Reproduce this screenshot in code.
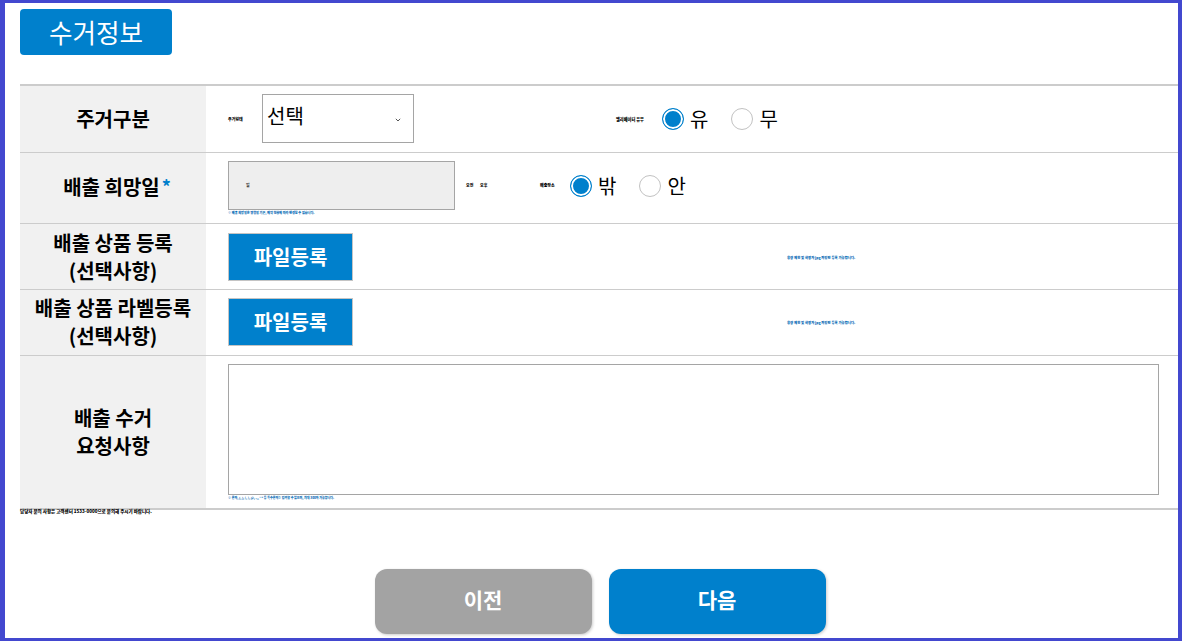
<script>
  let housing = 'yes';
  let side = 'out';
</script>

<div class="page">
  <h2 class="title">수거정보</h2>

  <div class="form">
    <div class="row r1">
      <div class="th">주거구분</div>
      <div class="td">
        <span class="tiny dark t1">주거형태</span>
        <div class="select">
          <span>선택</span>
          <svg width="6" height="4" viewBox="0 0 6 4"><path d="M.8.8 3 3l2.2-2.2" fill="none" stroke="#555" stroke-width="1"/></svg>
        </div>
        <span class="tiny dark t2">엘리베이터 유무</span>
        <label class="radio"><i class:on={housing === 'yes'}></i>유</label>
        <label class="radio"><i class:on={housing === 'no'}></i>무</label>
      </div>
    </div>

    <div class="row r2">
      <div class="th wish">배출 희망일<em>*</em></div>
      <div class="td col">
        <div class="line">
          <div class="date"><span class="tiny grey">일</span></div>
          <span class="tiny dark t3">오전</span>
          <span class="tiny dark t4">오후</span>
          <span class="tiny dark t5">배출장소</span>
          <label class="radio first"><i class:on={side === 'out'}></i>밖</label>
          <label class="radio"><i class:on={side === 'in'}></i>안</label>
        </div>
        <p class="tiny blue note">※ 배출 희망일은 영업일 기준, 예약 현황에 따라 변경될 수 있습니다.</p>
      </div>
    </div>

    <div class="row r3">
      <div class="th">배출 상품 등록<br />(선택사항)</div>
      <div class="td">
        <button class="file">파일등록</button>
        <span class="tiny blue hint">용량 제한 및 확장자 jpg 파일만 등록 가능합니다.</span>
      </div>
    </div>

    <div class="row r3 r4">
      <div class="th">배출 상품 라벨등록<br />(선택사항)</div>
      <div class="td">
        <button class="file">파일등록</button>
        <span class="tiny blue hint">용량 제한 및 확장자 jpg 파일만 등록 가능합니다.</span>
      </div>
    </div>

    <div class="row r5">
      <div class="th">배출 수거<br />요청사항</div>
      <div class="td col">
        <div class="area"></div>
        <p class="tiny blue note2">※ 문자, (, ), [, ], @, .,, ' " 등 특수문자는 입력할 수 없으며, 최대 300자 가능합니다.</p>
      </div>
    </div>
  </div>

  <p class="tiny dark foot">담당자 문의 사항은 고객센터 1533-0000으로 문의해 주시기 바랍니다.</p>

  <div class="actions">
    <button class="prev">이전</button>
    <button class="next">다음</button>
  </div>
</div>

<style>
:global(body) {
  margin: 0;
  background: #fff;
}
.page {
  box-sizing: border-box;
  width: 1182px;
  height: 641px;
  border-style: solid;
  border-color: #4348cf;
  border-width: 3px 4px 3px 5px;
  padding: 6px 0 0 15px;
  font-family: "Noto Sans CJK KR", "Noto Sans", sans-serif;
  color: #000;
  overflow: hidden;
}
.title {
  box-sizing: border-box;
  width: 152px;
  height: 46px;
  margin: 0 0 29px;
  background: #0080cc;
  border-radius: 4px;
  color: #fff;
  font-size: 25.6px;
  font-weight: 400;
  line-height: 45px;
  text-align: center;
}
.form {
  border-top: 2px solid #ccc;
  border-bottom: 2px solid #ccc;
}
.row {
  display: flex;
  border-top: 1px solid #ccc;
}
.row:first-child {
  border-top: 0;
}
.r1 { height: 66px; }
.r2 { height: 70px; }
.r3 { height: 65px; }
.r5 { height: 152px; }
.th {
  box-sizing: border-box;
  width: 186px;
  flex: none;
  display: flex;
  align-items: center;
  justify-content: center;
  flex-wrap: wrap;
  align-content: center;
  background: #f1f1f1;
  font-size: 20px;
  font-weight: 700;
  line-height: 28px;
  text-align: center;
}
.th.wish {
  padding: 0 0 2px 8px;
}
.th em {
  color: #0080cc;
  font-style: normal;
  font-size: 18px;
  margin: 0 0 2px 2px;
}
.r4 .th {
  padding-bottom: 2px;
}
.td {
  flex: 1;
  display: flex;
  align-items: center;
  padding-left: 22px;
  min-width: 0;
}
.td.col {
  flex-direction: column;
  align-items: flex-start;
  justify-content: flex-start;
}
.tiny {
  margin: 0;
  font-size: 4px;
  line-height: 5px;
  white-space: nowrap;
  font-weight: 900;
}
.dark { color: #000; }
.blue { color: #0068b4; }
.grey { color: #333; }
.t1 { width: 34px; flex: none; }
.t2 { margin-left: 202px; width: 46px; flex: none; font-size: 4.2px; }
.t3 { margin-left: 11px; width: 14px; flex: none; }
.t4 { width: 60px; flex: none; }
.t5 { width: 30px; flex: none; }
.select {
  box-sizing: border-box;
  width: 152px;
  height: 49px;
  margin-bottom: 2px;
  border: 1px solid #a5a5a5;
  display: flex;
  align-items: flex-start;
  justify-content: space-between;
  padding: 6px 12px 0 4px;
  font-size: 20px;
  line-height: 29px;
  flex: none;
}
.select svg {
  margin-top: 17px;
}
.radio {
  display: flex;
  align-items: center;
  gap: 6px;
  font-size: 20px;
  line-height: 28px;
  margin-right: 23px;
}
.radio i {
  box-sizing: border-box;
  display: block;
  width: 22px;
  height: 22px;
  border: 1px solid #c2c2c2;
  border-radius: 50%;
  background: #fff;
}
.radio i.on {
  border-color: #0080cc;
  background: #0080cc;
  box-shadow: inset 0 0 0 2px #fff;
}
.line {
  display: flex;
  align-items: center;
  margin-top: 8px;
}
.date {
  box-sizing: border-box;
  width: 227px;
  height: 49px;
  background: #eee;
  border: 1px solid #a5a5a5;
  padding-left: 17px;
  display: flex;
  align-items: center;
  flex: none;
}
.note {
  font-size: 3.1px;
  line-height: 6px;
}
.note2 {
  font-size: 3px;
  line-height: 5px;
  margin-top: 1px;
}
.file {
  box-sizing: border-box;
  width: 125px;
  height: 48px;
  padding: 0;
  background: #0080cc;
  border: 1px solid #c4c4c4;
  color: #fff;
  font-family: inherit;
  font-size: 20px;
  font-weight: 700;
  flex: none;
}
.r4 .file {
  margin-bottom: 2px;
}
.hint {
  margin-left: 434px;
  font-size: 3.4px;
  margin-top: 2px;
}
.r4 .hint {
  margin-top: 0;
}
.area {
  box-sizing: border-box;
  width: 931px;
  height: 131px;
  margin-top: 8px;
  background: #fff;
  border: 1px solid #a5a5a5;
}
.foot {
  height: 5px;
  margin-top: -1px;
  font-size: 4.5px;
}
.actions {
  display: flex;
  justify-content: center;
  gap: 17px;
  margin-top: 55px;
  padding-left: 2px;
}
.actions button {
  width: 217px;
  height: 65px;
  border: 0;
  border-radius: 12px;
  padding: 0 0 5px;
  color: #fff;
  font-family: inherit;
  font-size: 21px;
  font-weight: 700;
  box-shadow: 1px 1px 3px rgba(0, 0, 0, 0.2);
}
.prev { background: #a3a3a3; }
.next { background: #0080cc; }
</style>
